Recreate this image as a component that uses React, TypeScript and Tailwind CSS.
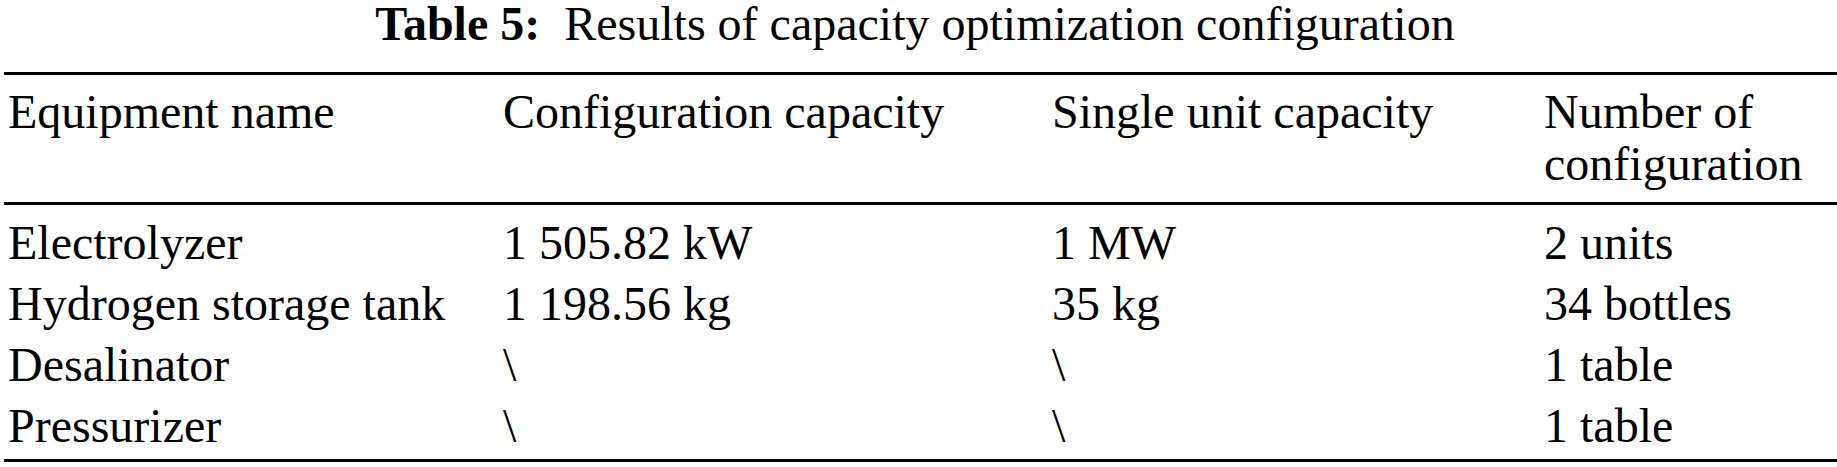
const columns = 'grid grid-cols-[495px_549px_492px_1fr]'

const rows = [
  ['Electrolyzer', '1 505.82 kW', '1 MW', '2 units'],
  ['Hydrogen storage tank', '1 198.56 kg', '35 kg', '34 bottles'],
  ['Desalinator', '\\', '\\', '1 table'],
  ['Pressurizer', '\\', '\\', '1 table'],
]

const Rule = ({ className = '' }: { className?: string }) => (
  <div className={`h-[3px] bg-black ${className}`} />
)

export default function App() {
  return (
    <div className="min-h-screen bg-white pl-[4px] font-['Liberation_Serif',serif] text-[48px] text-black">
      <h1 className="pr-[11px] text-center text-[48px] leading-[48px] font-normal">
        <span className="font-bold">Table 5:</span>{' '}
        <span className="ml-[12px]">Results of capacity optimization configuration</span>
      </h1>

      <Rule className="mt-[24px]" />
      <div className={`${columns} pt-[11px] pb-[12px] leading-[52px]`}>
        <div className="pl-[4px]">Equipment name</div>
        <div className="pl-[4px]">Configuration capacity</div>
        <div className="pl-[4px]">Single unit capacity</div>
        <div className="pl-[4px]">
          Number of
          <br />
          configuration
        </div>
      </div>

      <Rule />
      <div className={`${columns} pt-[7px] pb-[3px] leading-[61px]`}>
        {rows.map((row) =>
          row.map((cell, i) => (
            <div key={row[0] + i} className="pl-[4px] whitespace-nowrap">
              {cell}
            </div>
          )),
        )}
      </div>
      <Rule />
    </div>
  )
}
